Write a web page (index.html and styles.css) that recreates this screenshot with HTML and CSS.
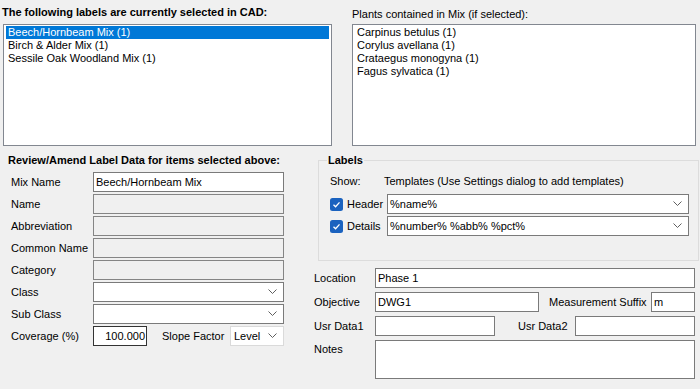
FILE: index.html
```html
<!DOCTYPE html>
<html lang="en">
<head>
    <meta charset="UTF-8">
    <title>Label Data</title>
    <link rel="stylesheet" href="styles.css">
</head>
<body>
    <div class="top">
        <div class="pane pane-left">
            <div class="caption bold">The following labels are currently selected in CAD:</div>
            <ul class="listbox">
                <li class="selected">Beech/Hornbeam Mix (1)</li>
                <li>Birch &amp; Alder Mix (1)</li>
                <li>Sessile Oak Woodland Mix (1)</li>
            </ul>
        </div>
        <div class="pane pane-right">
            <div class="caption">Plants contained in Mix (if selected):</div>
            <ul class="listbox">
                <li>Carpinus betulus (1)</li>
                <li>Corylus avellana (1)</li>
                <li>Crataegus monogyna (1)</li>
                <li>Fagus sylvatica (1)</li>
            </ul>
        </div>
    </div>

    <div class="bottom">
        <div class="review">
            <div class="heading bold">Review/Amend Label Data for items selected above:</div>
            <div class="form-grid">
                <label>Mix Name</label>
                <div class="field">Beech/Hornbeam Mix</div>
                <label>Name</label>
                <div class="field disabled"></div>
                <label>Abbreviation</label>
                <div class="field disabled"></div>
                <label>Common Name</label>
                <div class="field disabled"></div>
                <label>Category</label>
                <div class="field disabled"></div>
                <label>Class</label>
                <div class="field combo"><span></span><svg class="chev" width="10" height="6"><polyline points="0.5,0.5 4.5,4.5 8.5,0.5"/></svg></div>
                <label>Sub Class</label>
                <div class="field combo"><span></span><svg class="chev" width="10" height="6"><polyline points="0.5,0.5 4.5,4.5 8.5,0.5"/></svg></div>
                <label>Coverage (%)</label>
                <div class="coverage-row">
                    <div class="field num">100.000</div>
                    <span class="slope-label">Slope Factor</span>
                    <div class="field combo flat"><span>Level</span><svg class="chev" width="10" height="6"><polyline points="0.5,0.5 4.5,4.5 8.5,0.5"/></svg></div>
                </div>
            </div>
        </div>

        <div class="side">
            <fieldset class="labels-box">
                <legend>Labels</legend>
                <div class="show-row">
                    <span class="show-label">Show:</span>
                    <span>Templates (Use Settings dialog to add templates)</span>
                </div>
                <div class="template-row first">
                    <label class="check"><svg width="13" height="13"><rect x="0" y="0" width="13" height="13" rx="2.5"/><polyline points="3.5,6.8 5.6,8.8 9.5,4.4"/></svg>Header</label>
                    <div class="field combo"><span>%name%</span><svg class="chev" width="10" height="6"><polyline points="0.5,0.5 4.5,4.5 8.5,0.5"/></svg></div>
                </div>
                <div class="template-row">
                    <label class="check"><svg width="13" height="13"><rect x="0" y="0" width="13" height="13" rx="2.5"/><polyline points="3.5,6.8 5.6,8.8 9.5,4.4"/></svg>Details</label>
                    <div class="field combo"><span>%number% %abb% %pct%</span><svg class="chev" width="10" height="6"><polyline points="0.5,0.5 4.5,4.5 8.5,0.5"/></svg></div>
                </div>
            </fieldset>

            <div class="details-grid">
                <label>Location</label>
                <div class="field">Phase 1</div>
                <label>Objective</label>
                <div class="pair-row">
                    <div class="field objective">DWG1</div>
                    <span class="suffix-label">Measurement Suffix</span>
                    <div class="field suffix">m</div>
                </div>
                <label>Usr Data1</label>
                <div class="pair-row">
                    <div class="field usr">&nbsp;</div>
                    <span class="usr2-label">Usr Data2</span>
                    <div class="field usr">&nbsp;</div>
                </div>
                <label class="top-label">Notes</label>
                <div class="field notes"></div>
            </div>
        </div>
    </div>
</body>
</html>
```

FILE: styles.css
```css
body {
    margin: 0;
    width: 700px;
    height: 389px;
    overflow: hidden;
    background: #f0f0f0;
    color: #000;
    font-family: "Liberation Sans", Arial, sans-serif;
    font-size: 11px;
    line-height: 13px;
}
.bold { font-weight: bold; }

/* top lists */
.top {
    display: flex;
    padding: 6px 0 0 2px;
}
.pane-left { width: 330px; }
.pane-right { width: 344px; margin-left: 20px; }
.caption {
    height: 13px;
    margin-bottom: 5px;
    white-space: nowrap;
}
.pane-right .caption {
    height: 11px;
    padding-top: 2px;
}
.listbox {
    list-style: none;
    margin: 0;
    padding: 1px 2px;
    height: 122px;
    box-sizing: border-box;
    border: 1px solid #828790;
    background: #fff;
}
.pane-left .listbox { margin-left: 1px; width: 329px; }
.listbox li {
    height: 13px;
    padding-left: 2px;
    white-space: nowrap;
}
.listbox li.selected {
    background: #0078d7;
    color: #fff;
}

/* lower half */
.bottom {
    display: flex;
    padding-top: 8px;
}
.review {
    width: 314px;
    padding-left: 8px;
    box-sizing: border-box;
}
.heading {
    height: 13px;
    margin-bottom: 5px;
    white-space: nowrap;
}
.form-grid {
    display: grid;
    grid-template-columns: 85px 191px;
    row-gap: 2px;
    align-items: center;
}
.form-grid label { padding-left: 3px; }

.field {
    height: 20px;
    box-sizing: border-box;
    border: 1px solid #7a7a7a;
    background: #fff;
    padding: 0 2px;
    line-height: 18px;
    white-space: nowrap;
    overflow: hidden;
}
.field.disabled { background: #f0f0f0; border-color: #858585; }
.combo {
    display: flex;
    align-items: center;
    justify-content: space-between;
    padding-right: 5px;
}
.chev {
    fill: none;
    stroke: #5f5f5f;
    stroke-width: 1;
}
.combo.flat { border-color: #dadada; padding-left: 3px; }

.coverage-row {
    display: flex;
    align-items: center;
}
.field.num { width: 54px; text-align: right; padding-right: 1px; border-color: #333; }
.slope-label { margin-left: 15px; }
.coverage-row .combo { width: 54px; margin-left: auto; }

/* right side */
.side { width: 386px; }
.labels-box {
    margin: 0 0 0 4px;
    width: 381px;
    box-sizing: border-box;
    border: 1px solid #dcdcdc;
    padding: 8px 9px 24px 11px;
}
.labels-box legend {
    font-weight: bold;
    padding: 0 1px;
    margin-left: -3px;
}
.show-row { display: flex; }
.show-label { width: 54px; }
.template-row {
    display: grid;
    grid-template-columns: 57px 1fr;
    align-items: center;
    margin-top: 2px;
}
.template-row.first { margin-top: 6px; }
.check {
    display: flex;
    align-items: center;
    gap: 4px;
}
.check rect { fill: #1a62bf; }
.check polyline {
    fill: none;
    stroke: #fff;
    stroke-width: 1.3;
}

.details-grid {
    display: grid;
    grid-template-columns: 61px 320px;
    row-gap: 4px;
    align-items: center;
    margin-top: 7px;
}
.top-label { align-self: start; padding-top: 3px; }
.pair-row {
    display: flex;
    align-items: center;
}
.field.objective { width: 164px; }
.suffix-label { margin-left: 10px; }
.field.suffix { width: 44px; margin-left: auto; }
.field.usr { width: 120px; }
.usr2-label { margin-left: 23px; }
.pair-row .field.usr:last-child { margin-left: auto; }
.field.notes { height: 39px; }
```
